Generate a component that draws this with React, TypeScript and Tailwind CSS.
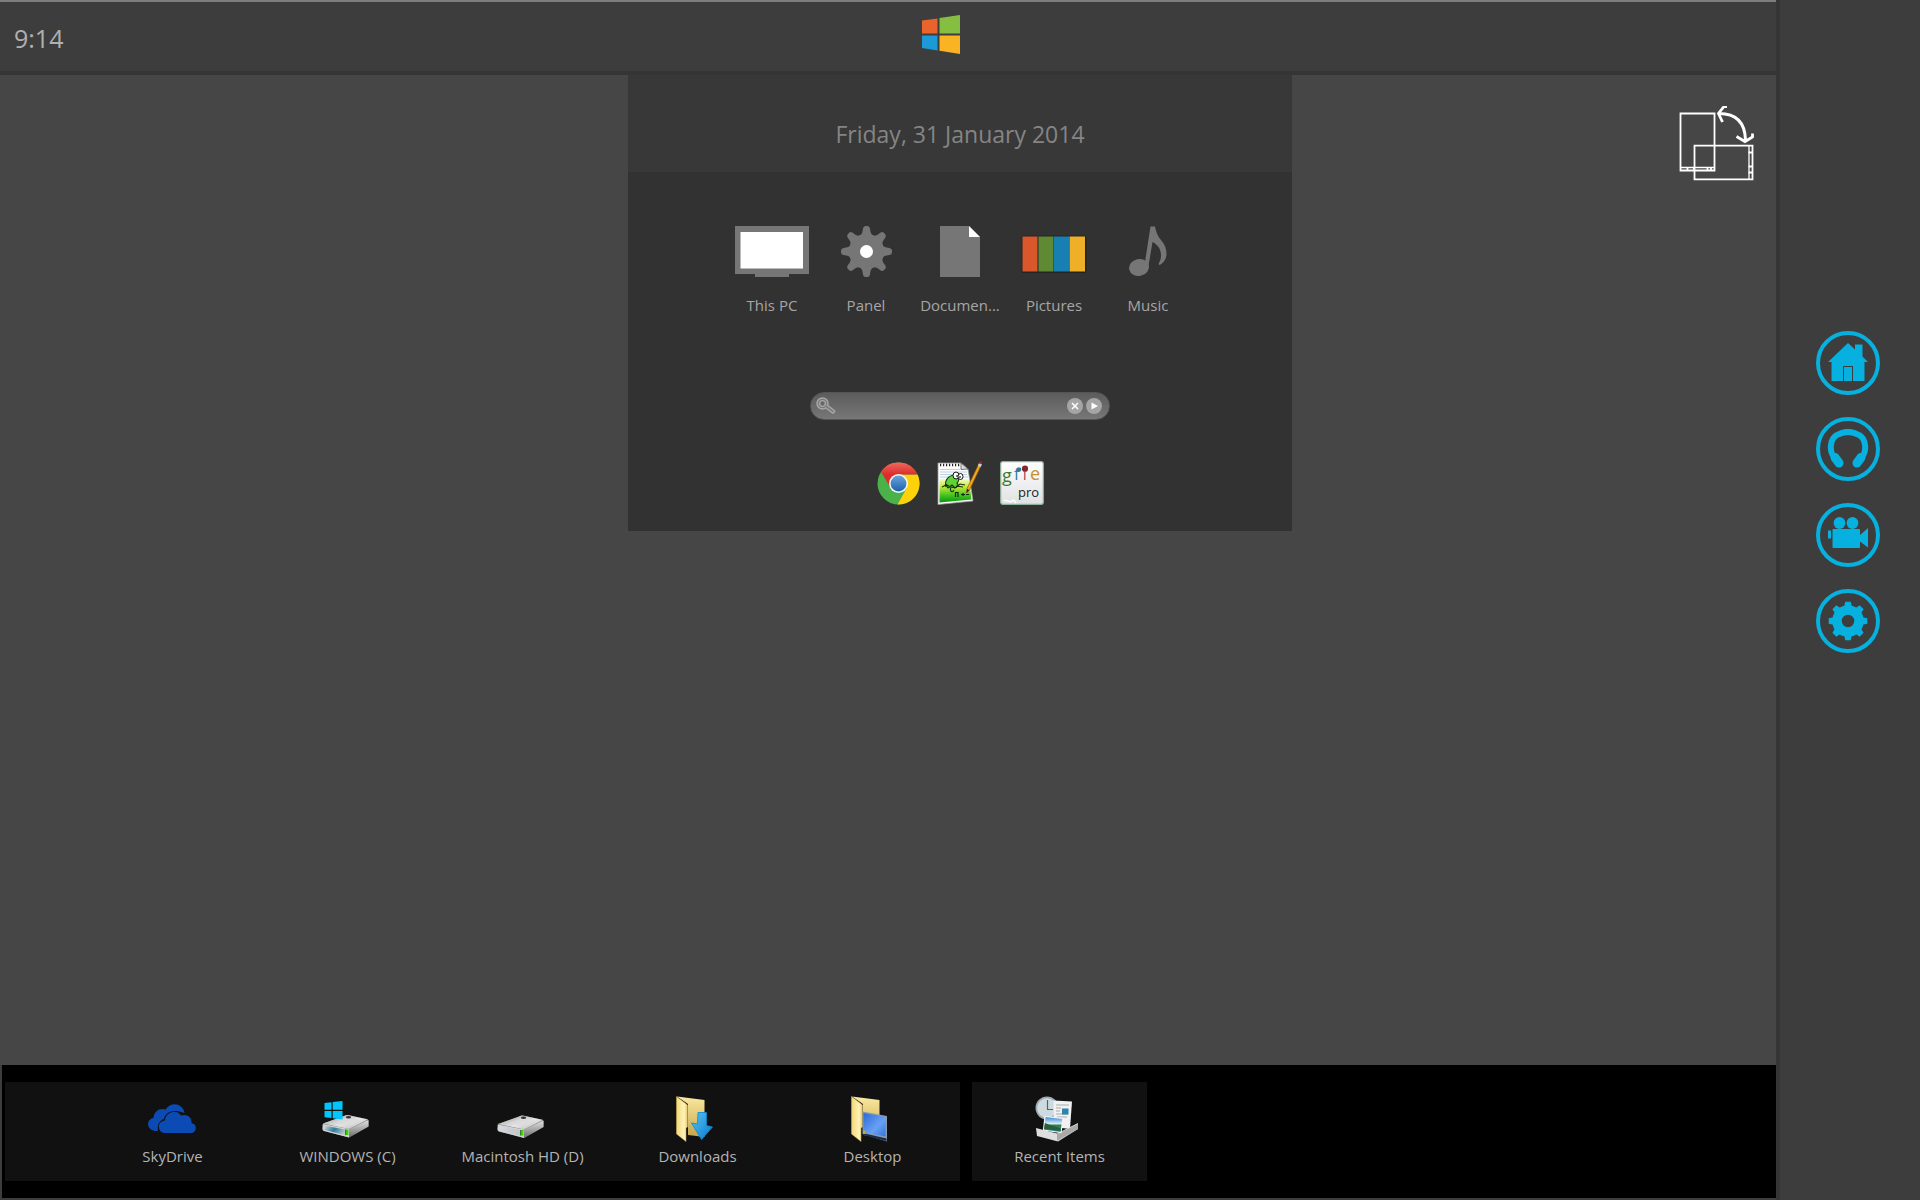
import React, { useState } from 'react';

interface LauncherItem {
  label: string;
  icon: React.ReactNode;
}

const toothAngles = [0, 45, 90, 135, 180, 225, 270, 315];

const WindowsLogo = () => (
  <svg width="38" height="39" viewBox="0 0 38 39">
    <path d="M0 5.5 15.5 3.4V18.5H0Z" fill="#ea632b" />
    <path d="M17.5 3.1 38 0V18.5H17.5Z" fill="#86be41" />
    <path d="M0 20.5H15.5V35.4L0 33Z" fill="#1b9ad7" />
    <path d="M17.5 20.5H38V39L17.5 35.8Z" fill="#fab322" />
  </svg>
);

const RotateIcon = () => (
  <svg width="76" height="76" viewBox="0 0 76 76" fill="none" stroke="#fff">
    <path d="M1.5 7.5H35.5V64.5H1.5Z" strokeWidth="1.8" />
    <path d="M1 61.5H36" strokeWidth="1.3" />
    <path d="M8.5 61V65M15 61V65M28.5 61V65M32 61V65" strokeWidth="1.8" />
    <path d="M15.5 39.7H73.5V73.3H15.5Z" strokeWidth="1.8" />
    <path d="M70 40V73" strokeWidth="1.3" />
    <path d="M69.5 46.5H74M69.5 60.5H74M69.5 66.5H74" strokeWidth="2" />
    <path d="M40 7.5C57 7.5 66 16 66.5 34" strokeWidth="3" />
    <path d="M48 0.5H45L39.5 7.5L43.5 16" strokeWidth="2.8" />
    <path d="M57.5 30.5L66 35.5L73.5 31V27.5" strokeWidth="2.8" />
  </svg>
);

const ComputerIcon = () => (
  <svg width="74" height="51" viewBox="0 0 74 51">
    <path d="M0 0H74V48H54V51H20V48H0Z" fill="#767676" />
    <rect x="5.5" y="6" width="62.5" height="36.5" fill="#fff" />
  </svg>
);

const PanelGearIcon = () => (
  <svg width="51" height="51" viewBox="-25.5 -25.5 51 51">
    <g fill="#767676">
      <circle r="17.5" />
      {toothAngles.map(angle => (
        <path
          key={angle}
          transform={`rotate(${angle})`}
          d="M-7.5 -15.5C-4.5 -17 -4 -19 -3.5 -23Q-3 -25.5 -1 -25.5H1Q3 -25.5 3.5 -23C4 -19 4.5 -17 7.5 -15.5Z"
        />
      ))}
    </g>
    <circle r="6.5" fill="#fff" />
  </svg>
);

const DocumentIcon = () => (
  <svg width="40" height="51" viewBox="0 0 40 51">
    <path d="M0 0H29L40 11V51H0Z" fill="#767676" />
    <path d="M29 0 40 11H29Z" fill="#fff" />
  </svg>
);

const PicturesIcon = () => (
  <svg width="66" height="51" viewBox="0 0 66 51">
    <rect x="0.5" y="9.5" width="65" height="37.5" rx="2" fill="#242424" />
    <rect x="1.5" y="10.5" width="15" height="35" fill="#d9572b" />
    <rect x="17.5" y="10.5" width="15" height="35" fill="#5f8a33" />
    <rect x="33" y="10.5" width="15" height="35" fill="#187fb3" />
    <rect x="48.5" y="10.5" width="15.5" height="35" fill="#efb027" />
  </svg>
);

const MusicIcon = () => (
  <svg width="38" height="51" viewBox="0 0 38 51" fill="#767676">
    <ellipse cx="10" cy="41.5" rx="10" ry="8.5" transform="rotate(-12 10 41.5)" />
    <path d="M21.5 0.5H26C27 5 28 9 32 14C40 23 39 35 30.5 39L29.5 38C34.5 30 32 20 23.5 16L19 43L16 36Z" />
  </svg>
);

const ChromeIcon = () => (
  <svg width="43" height="43" viewBox="0 0 43 43">
    <defs>
      <linearGradient id="chrome-red" x1="0" y1="0" x2="0" y2="1">
        <stop offset="0" stopColor="#f0695b" />
        <stop offset="0.5" stopColor="#dc2d2c" />
      </linearGradient>
      <linearGradient id="chrome-blue" x1="0" y1="0" x2="0" y2="1">
        <stop offset="0" stopColor="#6ba4dc" />
        <stop offset="1" stopColor="#1c62ab" />
      </linearGradient>
    </defs>
    <circle cx="21.5" cy="21.5" r="21" fill="#4bb14b" />
    <path d="M21.5 12.5H40.5A21 21 0 0 1 20.5 42.5L29.5 26.5Z" fill="#fdd20b" />
    <path d="M4 9.8A21 21 0 0 1 40.5 12.5H21.5L12.8 24.5Z" fill="url(#chrome-red)" />
    <circle cx="21.5" cy="21.5" r="9.5" fill="#f3f6f8" />
    <circle cx="21.5" cy="21.5" r="7.9" fill="url(#chrome-blue)" />
  </svg>
);

const NotepadIcon = () => (
  <svg width="46" height="44" viewBox="0 0 46 44">
    <defs>
      <linearGradient id="notepad-green" x1="0" y1="0" x2="0" y2="1">
        <stop offset="0" stopColor="#f4fbd0" />
        <stop offset="0.3" stopColor="#c8ee3a" />
        <stop offset="0.7" stopColor="#42c21f" />
        <stop offset="1" stopColor="#0a9112" />
      </linearGradient>
    </defs>
    <path d="M1 2H24L31 8L36 40L1 43.5Z" fill="#fdfdfd" stroke="#9a9a9a" strokeWidth="0.8" />
    <path d="M24 2V8.5L31 8Z" fill="#ddd" stroke="#555" strokeWidth="0.8" />
    <path d="M3 4H23" stroke="#222" strokeWidth="2.4" strokeDasharray="1.2 1.8" />
    <path d="M3 8.5H23M3 11H30M3 13.5H30M3 16H31" stroke="#a9c6dd" strokeWidth="0.8" />
    <path d="M2.5 18H32L34.5 38.5L2.5 41.5Z" fill="url(#notepad-green)" />
    <path d="M9 26C7 19 12 14 18 14C22 15 23 19 20 22C23 25 19 28 14 26C12 31 16 32 17 29" fill="#5fd336" stroke="#173b12" strokeWidth="1.1" />
    <path d="M5 26L9 24L11 27L15 24L18 27L23 23L28 24M8 23L12 25M19 25L26 26" fill="none" stroke="#20280f" strokeWidth="1.1" />
    <ellipse cx="19" cy="14.5" rx="3" ry="3.5" fill="#fff" stroke="#111" />
    <ellipse cx="23.5" cy="15.5" rx="2.5" ry="3" fill="#fff" stroke="#111" />
    <path d="M20 14V16M23 15V17M18.5 36V31.5H21V36M24 33.5H28M26 32V35M29 33.5H32" fill="none" stroke="#122b0c" strokeWidth="1.2" />
    <path d="M41.5 3.5L44 4.7L32.5 29L29.5 32L30 27.5Z" fill="#f3a81a" stroke="#805010" strokeWidth="0.6" />
    <path d="M42 2L45 3.3L43.8 6L40.8 4.7Z" fill="#c9c9d6" />
    <path d="M42.3 1Q43.5 -0.5 45.3 1.5L44.8 3.3L41.8 2.2Z" fill="#9f2525" />
    <path d="M29.5 32L30 28L32.3 29Z" fill="#2a2114" />
  </svg>
);

const GfieIcon = () => (
  <svg width="44" height="44" viewBox="0 0 44 44" fontFamily="'Open Sans', sans-serif">
    <defs>
      <linearGradient id="gfie-paper" x1="0" y1="0" x2="0" y2="1">
        <stop offset="0" stopColor="#fff" />
        <stop offset="1" stopColor="#e0e1e3" />
      </linearGradient>
    </defs>
    <rect x="0.7" y="0.7" width="42.6" height="42.6" rx="2" fill="url(#gfie-paper)" stroke="#8fb39a" strokeWidth="1.2" />
    <text x="2" y="21" fontSize="18" fill="#397c32">g</text>
    <text x="14" y="19" fontSize="16" fill="#347995">f</text>
    <text x="23" y="19" fontSize="14" fill="#963a42">i</text>
    <text x="30" y="19" fontSize="18" fill="#c2922b">e</text>
    <circle cx="19" cy="8.5" r="2.3" fill="#347995" />
    <circle cx="25" cy="7.7" r="3.1" fill="#84282f" />
    <text x="18" y="36" fontSize="13" fill="#222">pro</text>
    <path d="M4 40C6 37 9 43 12 40S15 43 16 41" fill="none" stroke="#fff" strokeWidth="1.5" />
  </svg>
);

const SearchKeyIcon = () => (
  <svg width="20" height="18" viewBox="0 0 20 18" fill="none">
    <path d="M10.5 9.5L17 14.5" stroke="#a8a8a8" strokeWidth="4.4" strokeLinecap="round" />
    <circle cx="6.5" cy="6.5" r="4.2" stroke="#a8a8a8" strokeWidth="4" />
    <circle cx="6.5" cy="6.5" r="4.2" stroke="#7c7c7c" strokeWidth="1.2" />
    <path d="M10.5 9.5L17 14.5" stroke="#7c7c7c" strokeWidth="1.6" strokeLinecap="round" />
  </svg>
);

const HomeIcon = () => (
  <svg width="40" height="40" viewBox="0 0 40 40" fill="#06b0df">
    <path d="M20 0L27 6.5V1.5H34.5V13.5L40 19H36.5V38H25V23H15V38H3.5V19H0Z" />
    <rect x="16" y="24" width="8" height="14" />
  </svg>
);

const HeadphonesIcon = () => (
  <svg width="42" height="40" viewBox="0 0 42 40" fill="none">
    <path d="M7.5 28C2.5 24 2 10 10 6C17 2 25 2 32 6C40 10 39.5 24 34.5 28" stroke="#06b0df" strokeWidth="6" />
    <path d="M8 28.5L12 34M34 28.5L30 34" stroke="#06b0df" strokeWidth="9" strokeLinecap="round" />
  </svg>
);

const CameraIcon = () => (
  <svg width="40" height="40" viewBox="0 0 40 40" fill="#06b0df">
    <circle cx="11.5" cy="8" r="5.9" />
    <circle cx="24.5" cy="8" r="5.9" />
    <rect x="4.5" y="14" width="27.5" height="19" rx="0.8" />
    <rect x="0" y="15.5" width="3" height="8" />
    <path d="M32 20L40 13V32.5L32 26.5Z" />
  </svg>
);

const SettingsIcon = () => (
  <svg width="40" height="40" viewBox="-20 -20 40 40">
    <g fill="#06b0df">
      {toothAngles.map(angle => (
        <path key={angle} transform={`rotate(${angle})`} d="M-4 -13L-2.8 -19.3H2.8L4 -13Z" />
      ))}
    </g>
    <circle r="11" fill="none" stroke="#06b0df" strokeWidth="9.5" />
  </svg>
);

const SkyDriveIcon = () => (
  <svg width="48" height="30" viewBox="0 0 48 30" fill="#0b4bb3">
    <path d="M7 27C-2 26 -2 15 5.5 14C6 7 12 3.5 17.5 5.5C23 -3 35 -0.5 36.5 9C33 7.5 31 7.5 28 7C22 6.5 17 10 16 15C11 16.5 9 22 10 27Z" />
    <path d="M16 29C9 28 9 17 17 16.5C17 9 28 4 33 11.5C39 9.5 44 13 43.5 19C49.5 20 49 28.5 43.5 29Z" />
  </svg>
);

const DriveBody = ({ tint, id }: { tint: string; id: string }) => (
  <>
    <defs>
      <linearGradient id={`${id}-top`} x1="0" y1="0" x2="1" y2="1">
        <stop offset="0" stopColor="#9c9c9c" />
        <stop offset="0.55" stopColor="#e6e6e6" />
        <stop offset="1" stopColor="#b0b0b0" />
      </linearGradient>
      <linearGradient id={`${id}-side`} x1="0" y1="0" x2="0" y2="1">
        <stop offset="0" stopColor="#e2e2e2" />
        <stop offset="1" stopColor="#6b6b6b" />
      </linearGradient>
      <linearGradient id={`${id}-front`} x1="0" y1="0" x2="1" y2="0.3">
        <stop offset="0" stopColor="#d9dde4" />
        <stop offset="0.5" stopColor={tint} />
        <stop offset="1" stopColor="#bfc7c9" />
      </linearGradient>
    </defs>
    <path d="M1 9L22 1.5Q25 0 28 1L45 4.5Q46.5 5 46.5 7V12L27 23L2 16.5Q0.5 16 0.5 14V10Z" fill="#777" />
    <path d="M1 9L22 1.5Q25 0 28 1L46 5L27 14.5Z" fill={`url(#${id}-top)`} />
    <path d="M11 8.5L24 3L38 5.5L25 11Z" fill="#dadada" fillOpacity="0.7" />
    <path d="M1 9.5L27 14.5V23L2 16.5Q0.5 16 0.5 14Z" fill="#d2d2d2" />
    <path d="M2 11L25.5 15.5V21.3L3 15.5Z" fill={`url(#${id}-front)`} />
    <path d="M27 14.5L46.5 5.5V12L27 23Z" fill={`url(#${id}-side)`} />
    <ellipse cx="26.5" cy="2.7" rx="2.6" ry="1.3" fill="#333" />
    <rect x="23.8" y="15" width="2.6" height="5.5" fill="#36d800" />
    <rect x="23.3" y="15" width="0.8" height="5.5" fill="#145d00" />
  </>
);

const WindowsDriveIcon = () => (
  <svg width="48" height="37" viewBox="0 0 48 37">
    <g transform="translate(0 13.5)">
      <DriveBody id="win-drive" tint="#2d7d9c" />
    </g>
    <path d="M2.5 2L9.5 1.2V8.8H2.5ZM10.7 1L20.5 0V8.8H10.7ZM2.5 10H9.5V17L2.5 16.2ZM10.7 10H20.5V18.5L10.7 17.2Z" fill="#00c6ff" />
  </svg>
);

const MacDriveIcon = () => (
  <svg width="48" height="23" viewBox="0 0 48 23">
    <DriveBody id="mac-drive" tint="#c9ccd6" />
  </svg>
);

const FolderBase = ({ id }: { id: string }) => (
  <>
    <defs>
      <linearGradient id={`${id}-back`} x1="0" y1="0" x2="0" y2="1">
        <stop offset="0" stopColor="#fbe9a0" />
        <stop offset="1" stopColor="#c3a54c" />
      </linearGradient>
      <linearGradient id={`${id}-flap`} x1="0" y1="0" x2="1" y2="0">
        <stop offset="0" stopColor="#f3d876" />
        <stop offset="0.7" stopColor="#fff3b9" />
        <stop offset="1" stopColor="#e6c666" />
      </linearGradient>
    </defs>
    <path d="M1 0.5L28.5 4V41L12 39V8Z" fill={`url(#${id}-back)`} />
    <path d="M0.5 0.5L11.5 9V31L10 32V45.5L0.5 38Z" fill={`url(#${id}-flap)`} stroke="#d1b458" strokeWidth="0.5" />
  </>
);

const DownloadsIcon = () => (
  <svg width="38" height="46" viewBox="0 0 38 46">
    <defs>
      <linearGradient id="download-arrow" x1="0" y1="0" x2="1" y2="1">
        <stop offset="0" stopColor="#58c4f5" />
        <stop offset="1" stopColor="#0878cc" />
      </linearGradient>
    </defs>
    <FolderBase id="downloads" />
    <path d="M22 16.5H30.5V29.5L36.5 31L25.5 43.5L15.5 27L21.5 28Z" fill="url(#download-arrow)" stroke="#0b86ce" strokeWidth="0.8" />
  </svg>
);

const DesktopIcon = () => (
  <svg width="38" height="46" viewBox="0 0 38 46">
    <defs>
      <linearGradient id="desktop-screen" x1="0" y1="0" x2="1" y2="1">
        <stop offset="0" stopColor="#2d69d8" />
        <stop offset="0.6" stopColor="#67a1f5" />
        <stop offset="1" stopColor="#3474da" />
      </linearGradient>
    </defs>
    <FolderBase id="desktop" />
    <path d="M11.5 15.5L36 20V45.5L11.5 38Z" fill="#8b99ab" />
    <path d="M12.5 17L34.5 21V40.5L12.5 36Z" fill="url(#desktop-screen)" />
    <path d="M11.5 37L35.5 42.5V45L11.5 38.8Z" fill="#182b48" />
    <rect x="12" y="34.5" width="2.5" height="3.5" fill="#caa62d" />
  </svg>
);

const RecentItemsIcon = () => (
  <svg width="44" height="46" viewBox="0 0 44 46">
    <defs>
      <linearGradient id="recent-photo" x1="0" y1="0" x2="0" y2="1">
        <stop offset="0" stopColor="#2d83cf" />
        <stop offset="0.45" stopColor="#d6edf9" />
        <stop offset="0.55" stopColor="#3f7c45" />
        <stop offset="1" stopColor="#1b91bd" />
      </linearGradient>
    </defs>
    <circle cx="12" cy="12" r="11.5" fill="#9eabb1" />
    <circle cx="12" cy="12" r="9.8" fill="#cddae0" />
    <path d="M12.5 4V13.5H18" stroke="#51646f" strokeWidth="1.2" fill="none" />
    <path d="M18.5 4.5L37 5.5L35 33L19 31Z" fill="#f1f1f1" />
    <path d="M21 9H34M21 12H26M21 15H25M21 18H33M22 21H32" stroke="#ababab" strokeWidth="1" />
    <rect x="27" y="12.5" width="6.5" height="6" fill="#2c83ad" />
    <path d="M1 32L22 37.5L43 27V33L23 45.5L2 40Z" fill="#dededc" />
    <path d="M22 38V45L43 33V28Z" fill="#a9a9a7" />
    <path d="M10 20.5L28 22.5L26 36.5L8.5 34Z" fill="url(#recent-photo)" stroke="#f5f5f5" strokeWidth="1.2" />
    <path d="M10 27L15 29L25 32L26 35L9 33Z" fill="#276039" />
  </svg>
);

const libraryItems: LauncherItem[] = [
  { label: 'This PC', icon: <ComputerIcon /> },
  { label: 'Panel', icon: <PanelGearIcon /> },
  { label: 'Documen...', icon: <DocumentIcon /> },
  { label: 'Pictures', icon: <PicturesIcon /> },
  { label: 'Music', icon: <MusicIcon /> },
];

const appItems: LauncherItem[] = [
  { label: 'Chrome', icon: <ChromeIcon /> },
  { label: 'Notepad++', icon: <NotepadIcon /> },
  { label: 'GFIE Pro', icon: <GfieIcon /> },
];

const sideItems: LauncherItem[] = [
  { label: 'Home', icon: <HomeIcon /> },
  { label: 'Audio', icon: <HeadphonesIcon /> },
  { label: 'Video', icon: <CameraIcon /> },
  { label: 'Settings', icon: <SettingsIcon /> },
];

const driveItems: LauncherItem[] = [
  { label: 'SkyDrive', icon: <SkyDriveIcon /> },
  { label: 'WINDOWS (C)', icon: <WindowsDriveIcon /> },
  { label: 'Macintosh HD (D)', icon: <MacDriveIcon /> },
];

const folderItems: LauncherItem[] = [
  { label: 'Downloads', icon: <DownloadsIcon /> },
  { label: 'Desktop', icon: <DesktopIcon /> },
];

const DockButton = ({ item, className }: { item: LauncherItem; className: string }) => (
  <button className="flex w-[175px] flex-col items-center pt-[9px] pb-[15px]">
    <span className={`flex h-[51px] items-end ${className}`}>{item.icon}</span>
    <span className="mt-1 text-[15px] leading-5 text-[#b4b4b4]">{item.label}</span>
  </button>
);

const SearchBar = () => {
  const [query, setQuery] = useState('');

  return (
    <form
      onSubmit={e => e.preventDefault()}
      className="flex h-7 w-[300px] items-center rounded-full border border-[#555] bg-linear-to-b from-[#5c5c5c] to-[#777] pr-[7px] pl-[5px]"
    >
      <SearchKeyIcon />
      <input
        type="text"
        aria-label="Search"
        value={query}
        onChange={e => setQuery(e.target.value)}
        className="min-w-0 flex-1 bg-transparent px-2 text-sm text-white outline-none"
      />
      <button type="button" aria-label="Clear" onClick={() => setQuery('')} className="flex size-4 items-center justify-center rounded-full bg-[#a5a5a5]">
        <svg width="8" height="8" viewBox="0 0 8 8" stroke="#fff" strokeWidth="1.5">
          <path d="M1 1L7 7M7 1L1 7" />
        </svg>
      </button>
      <button type="submit" aria-label="Go" className="ml-[3px] flex size-4 items-center justify-center rounded-full bg-[#a5a5a5]">
        <svg width="8" height="8" viewBox="0 0 8 8" fill="#fff">
          <path d="M1.5 0.5L8 4L1.5 7.5Z" />
        </svg>
      </button>
    </form>
  );
};

export default function App() {
  return (
    <div className="flex min-h-screen bg-[#464646] font-['Open_Sans',sans-serif]">
      <div className="flex min-w-0 flex-1 flex-col">
        <header className="grid h-[75px] grid-cols-[106px_1fr] border-t-2 border-b-4 border-t-[#7d7d7d] border-b-[#353535] bg-[#3d3d3d]">
          <time className="pt-5 pl-[14px] text-[25px] leading-8 text-[#b0b0b0]">9:14</time>
          <button aria-label="Start" className="mt-[13px] justify-self-center self-start">
            <WindowsLogo />
          </button>
        </header>

        <main className="grid flex-1 grid-cols-[1fr_664px_1fr] items-start pl-36">
          <section className="col-start-2 bg-[#323232]">
            <h1 className="bg-[#383838] pt-[43px] pb-[22px] text-center text-[23px] leading-8 text-[#858585]">Friday, 31 January 2014</h1>
            <nav className="flex justify-center pt-[54px]">
              {libraryItems.map(item => (
                <button key={item.label} className="flex w-[94px] flex-col items-center">
                  {item.icon}
                  <span className="mt-[18px] text-[15px] leading-5 text-[#a6a6a6]">{item.label}</span>
                </button>
              ))}
            </nav>
            <div className="flex justify-center pt-[77px]">
              <SearchBar />
            </div>
            <div className="flex justify-center gap-[17px] pt-[41px] pb-[26px]">
              {appItems.map(item => (
                <button key={item.label} aria-label={item.label} className="flex h-11 items-center">
                  {item.icon}
                </button>
              ))}
            </div>
          </section>
          <button aria-label="Rotate screen" className="mt-[31px] mr-[21px] justify-self-end">
            <RotateIcon />
          </button>
        </main>

        <footer className="flex gap-3 border-b-2 border-l-2 border-[#3d3d3d] bg-black py-[17px] pl-[3px]">
          <div className="flex bg-[#111] pl-20">
            {driveItems.map(item => (
              <DockButton key={item.label} item={item} className={item.label === 'SkyDrive' ? 'pr-0.5 pb-2' : 'pr-1 pb-1'} />
            ))}
            {folderItems.map(item => (
              <DockButton key={item.label} item={item} className="pr-1.5" />
            ))}
          </div>
          <div className="flex bg-[#111]">
            <DockButton item={{ label: 'Recent Items', icon: <RecentItemsIcon /> }} className="pr-1.5" />
          </div>
        </footer>
      </div>

      <aside className="flex w-36 shrink-0 flex-col items-center gap-[22px] border-l-4 border-[#353535] bg-[#3d3d3d] pt-[331px] pr-1">
        {sideItems.map(item => (
          <button
            key={item.label}
            aria-label={item.label}
            className="flex size-16 items-center justify-center rounded-full border-4 border-[#06b0df]"
          >
            {item.icon}
          </button>
        ))}
      </aside>
    </div>
  );
}
